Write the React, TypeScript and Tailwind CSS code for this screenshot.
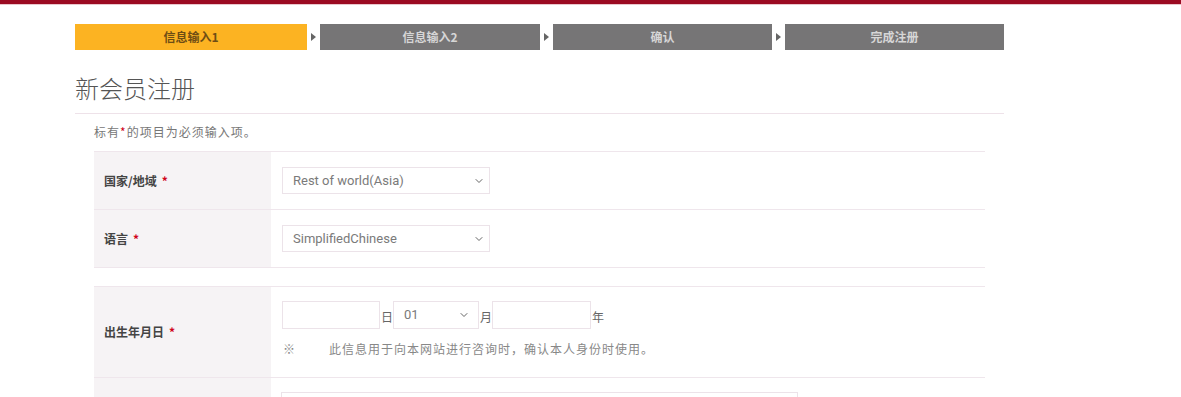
import { ChevronDown } from "lucide-react";

const steps = [
  { label: "信息输入1", w: "w-[232px]", active: true },
  { label: "信息输入2", w: "w-[220px]", active: false },
  { label: "确认", w: "w-[219px]", active: false },
  { label: "完成注册", w: "w-[219px]", active: false },
];

function Req() {
  return <span className="ml-[5px] text-[#d0021b]">*</span>;
}

function Select({ value, className }: { value: string; className: string }) {
  return (
    <div className={`flex h-[27px] items-center justify-between border border-[#ece3e9] bg-white font-['Roboto','Noto_Sans_CJK_SC',sans-serif] text-[13px] text-[#7a7a7a] ${className}`}>
      <span>{value}</span>
      <ChevronDown className="h-3 w-3 text-[#666]" strokeWidth={2} />
    </div>
  );
}

export default function App() {
  return (
    <div className="min-h-[397px] bg-white font-['Noto_Sans_CJK_SC',sans-serif] text-[#333]">
      <div className="h-[4px] bg-[#9b0b22]" />
      <div className="h-px bg-[#e9c6cc]" />

      <div className="ml-[75px] w-[929px]">
        <div className="mt-[19px] flex items-center">
          {steps.map((s, i) => (
            <div key={s.label} className="flex items-center">
              {i > 0 && (
                <div className="flex w-[13px] justify-center">
                  <svg width="5" height="8" viewBox="0 0 5 8">
                    <path d="M0 0 L5 4 L0 8 Z" fill="#666" />
                  </svg>
                </div>
              )}
              <div
                className={`flex h-[26px] items-center justify-center text-[12px] font-bold ${s.w} ${
                  s.active ? "bg-[#fcb322] text-[#6e4d14]" : "bg-[#767576] text-[#d6d6d6]"
                }`}
              >
                {s.label}
              </div>
            </div>
          ))}
        </div>

        <div className="border-b border-[#eee2e9] pt-[24px] pb-[11px]">
          <h1 className="text-[24px] leading-[28px] font-light text-[#555]">新会员注册</h1>
        </div>

        <div className="pl-[19px]">
          <p className="mt-[9px] text-[12px] leading-[18px] tracking-[1px] text-[#777]">
            标有<span className="text-[#d0021b]">*</span>的项目为必须输入项。
          </p>

          <div className="mt-[10px] w-[891px] border-b border-[#efe6ec]">
            <div className="flex border-t border-[#efe6ec]">
              <div className="flex w-[177px] items-center bg-[#f6f3f5] pl-[10px] text-[12px] font-bold text-[#444]">
                国家/地域<Req />
              </div>
              <div className="py-[15px] pl-[11px]">
                <Select value="Rest of world(Asia)" className="w-[208px] pr-[4px] pl-[10px]" />
              </div>
            </div>
            <div className="flex border-t border-[#efe6ec]">
              <div className="flex w-[177px] items-center bg-[#f6f3f5] pl-[10px] text-[12px] font-bold text-[#444]">
                语言<Req />
              </div>
              <div className="py-[15px] pl-[11px]">
                <Select value="SimplifiedChinese" className="w-[208px] pr-[4px] pl-[10px]" />
              </div>
            </div>
          </div>

          <div className="mt-[18px] w-[891px]">
            <div className="flex border-t border-[#efe6ec]">
              <div className="flex w-[177px] items-center bg-[#f6f3f5] pl-[10px] text-[12px] font-bold text-[#444]">
                出生年月日<Req />
              </div>
              <div className="pt-[14px] pb-[19px] pl-[11px]">
                <div className="flex items-center text-[12px] text-[#666]">
                  <div className="h-[28px] w-[98px] border border-[#ece3e9]" />
                  <span className="mx-[1px] mt-[3px] w-[11px]">日</span>
                  <Select value="01" className="h-[28px] w-[86px] pr-[8px] pl-[10px]" />
                  <span className="mx-[1px] mt-[3px] w-[11px]">月</span>
                  <div className="h-[28px] w-[99px] border border-[#ece3e9]" />
                  <span className="mt-[3px] ml-[1px]">年</span>
                </div>
                <div className="mt-[11px] flex text-[12px] leading-[18px] tracking-[1px] text-[#888]">
                  <span className="w-[47px] pl-[1px]">※</span>
                  <span>此信息用于向本网站进行咨询时，确认本人身份时使用。</span>
                </div>
              </div>
            </div>
            <div className="flex border-t border-[#efe6ec]">
              <div className="w-[177px] bg-[#f6f3f5]" />
              <div className="h-[40px] pt-[14px] pl-[10px]">
                <div className="h-[28px] w-[517px] border border-[#ece3e9]" />
              </div>
            </div>
          </div>
        </div>
      </div>
    </div>
  );
}
